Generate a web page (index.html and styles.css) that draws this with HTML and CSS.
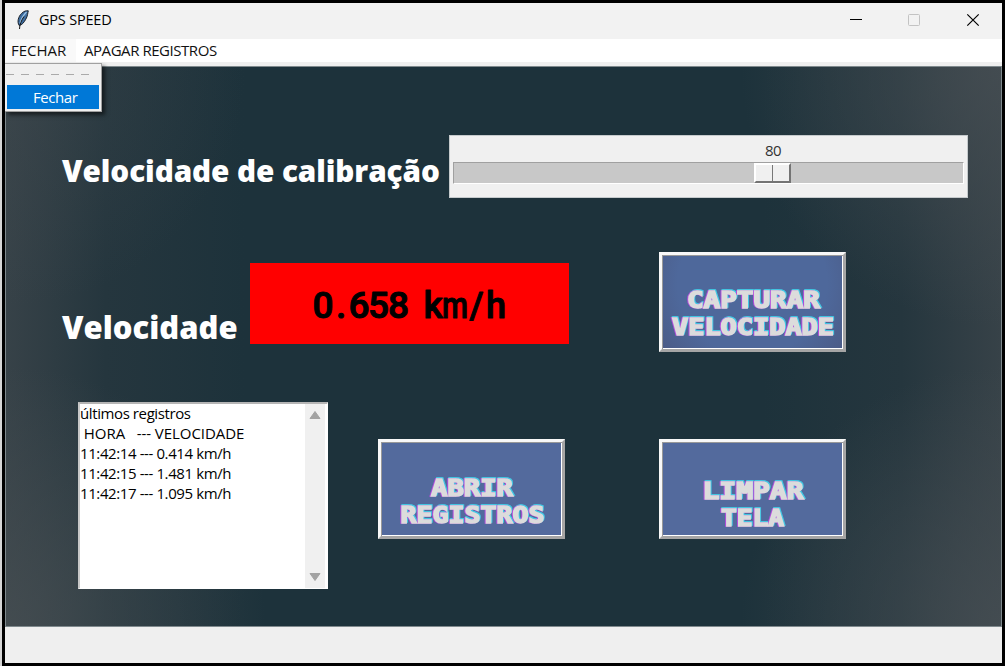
FILE: index.html
```html
<!DOCTYPE html>
<html lang="pt-BR">
<head>
<meta charset="utf-8">
<title>GPS SPEED</title>
<link rel="stylesheet" href="styles.css">
</head>
<body>
<div class="window">
  <header class="titlebar">
    <svg class="feather" width="14" height="20" viewBox="0 0 14 20">
      <path d="M3.2 15.5 C.8 12 2.4 6.5 5.5 3.5 C8 1 10 .6 12.3 .8 C11.6 3 11.8 6 9.8 9.2 C8 12.5 6 15 3.2 15.5Z" fill="#3d6c9f" stroke="#1b222b" stroke-width="1"/>
      <path d="M4 13.5 C5 9.5 7 5.5 10.5 2" fill="none" stroke="#9cc3e6" stroke-width="1.2"/>
      <path d="M3.5 19 C3.5 15 5.5 10 8 6.5" fill="none" stroke="#161616" stroke-width="1"/>
    </svg>
    <span class="title">GPS SPEED</span>
    <svg class="controls" width="130" height="14" viewBox="0 0 130 14" fill="none">
      <path d="M0 6.5H12" stroke="#000"/>
      <rect x="58.5" y="1.5" width="11" height="11" rx="1" stroke="#c3c3c3"/>
      <path d="M117.3 1.3L128.7 12.7M128.7 1.3L117.3 12.7" stroke="#000" stroke-width="1.2"/>
    </svg>
  </header>
  <nav class="menubar">
    <span class="menu menu-open">FECHAR</span>
    <span class="menu">APAGAR REGISTROS</span>
    <div class="dropdown">
      <div class="tearoff"></div>
      <div class="item">Fechar</div>
    </div>
  </nav>
  <main class="canvas">
    <section class="row calibration">
      <h2 class="label label-cal">Velocidade de calibração</h2>
      <div class="scale">
        <div class="scale-value">80</div>
        <div class="trough"><div class="thumb"><i></i><i></i></div></div>
      </div>
    </section>
    <section class="row speed">
      <h2 class="label label-speed">Velocidade</h2>
      <div class="readout">
        <svg width="320" height="81"><text class="hand" y="54.5"><tspan x="62.5 86 98.5 118 138 157">0.658 </tspan><tspan x="173.5">k</tspan><tspan x="192" textLength="26" lengthAdjust="spacingAndGlyphs">m</tspan><tspan x="219.5" textLength="14" lengthAdjust="spacingAndGlyphs">/</tspan><tspan x="236" textLength="20" lengthAdjust="spacingAndGlyphs">h</tspan></text></svg>
      </div>
      <button class="btn btn-vignette">
        <svg width="181" height="94">
          <g class="retro">
            <text x="25" y="53" textLength="133" lengthAdjust="spacingAndGlyphs">CAPTURAR</text>
            <text x="10" y="80" textLength="162" lengthAdjust="spacingAndGlyphs">VELOCIDADE</text>
          </g>
        </svg>
      </button>
    </section>
    <section class="row records">
      <div class="listbox">
        <ul class="list">
          <li>últimos registros</li>
          <li class="heads"> HORA   --- VELOCIDADE</li>
          <li>11:42:14 --- 0.414 km/h</li>
          <li>11:42:15 --- 1.481 km/h</li>
          <li>11:42:17 --- 1.095 km/h</li>
        </ul>
        <div class="scrollbar">
          <svg width="12" height="8"><path d="M6 0.5L11 7.5H1Z" fill="#a3a3a3" stroke="#a3a3a3" stroke-linejoin="round"/></svg>
          <svg width="12" height="8"><path d="M6 7.5L11 .5H1Z" fill="#a3a3a3" stroke="#a3a3a3" stroke-linejoin="round"/></svg>
        </div>
      </div>
      <button class="btn btn-open">
        <svg width="181" height="94">
          <g class="retro">
            <text x="50" y="54" textLength="82" lengthAdjust="spacingAndGlyphs">ABRIR</text>
            <text x="19.5" y="81" textLength="144" lengthAdjust="spacingAndGlyphs">REGISTROS</text>
          </g>
        </svg>
      </button>
      <button class="btn btn-clear">
        <svg width="181" height="94">
          <g class="retro">
            <text x="40.5" y="57" textLength="101" lengthAdjust="spacingAndGlyphs">LIMPAR</text>
            <text x="59" y="84" textLength="63" lengthAdjust="spacingAndGlyphs">TELA</text>
          </g>
        </svg>
      </button>
    </section>
  </main>
  <footer class="footer"></footer>
</div>
</body>
</html>
```
FILE: styles.css
```css
* { box-sizing: border-box; }
body {
  margin: 0;
  padding-left: 2px;
  background: #d6d6d6;
  font-family: "Open Sans", "Noto Sans", sans-serif;
}
.window {
  width: 1003px;
  height: 666px;
  border: 3px solid #000;
  background: #efefef;
  display: flex;
  flex-direction: column;
}
.titlebar {
  height: 36px;
  background: #f2f2f2;
  display: flex;
  align-items: center;
  padding: 0 22px 2px 11px;
}
.title {
  margin: -2px 0 0 9px;
  font-size: 14.5px;
  letter-spacing: -0.2px;
  color: #000;
}
.controls { margin-left: auto; }
.menubar {
  position: relative;
  height: 23px;
  background: #fff;
  display: flex;
  font-size: 15px;
  line-height: 22px;
  letter-spacing: -0.45px;
  color: #111;
}
.menu { padding: 0 9px 0 8px; }
.menu-open {
  width: 71px;
  padding: 0 0 0 6px;
  background: #f9f9f9;
  letter-spacing: 0;
}
.dropdown {
  position: absolute;
  z-index: 2;
  left: 0;
  top: 24px;
  width: 97px;
  height: 49px;
  padding: 1px 2px 2px 1px;
  background: #f0f0f0;
  border: 1px solid #a0a0a0;
  border-left: 0;
  box-shadow: 3px 3px 4px rgba(0, 0, 0, 0.55);
}
.tearoff {
  height: 20px;
  background: repeating-linear-gradient(90deg, #aaa 0 8px, transparent 8px 15px) 0 9px / 84px 1px no-repeat;
}
.item {
  width: 92px;
  height: 24px;
  margin-left: 1px;
  padding-left: 26px;
  background: #0078d7;
  color: #fff;
  line-height: 24px;
}
.canvas {
  height: 561px;
  margin-top: 4px;
  border: 1px solid #7f898d;
  background:
    radial-gradient(ellipse 240px 240px at 0 0, rgba(66, 75, 80, 0.4) 0%, rgba(60, 72, 78, 0) 100%),
    radial-gradient(ellipse 260px 260px at 100% 0, rgba(70, 78, 83, 0.8) 0%, rgba(60, 72, 78, 0) 100%),
    radial-gradient(ellipse 260px 260px at 0 100%, rgba(70, 78, 82, 0.8) 0%, rgba(60, 72, 78, 0) 100%),
    radial-gradient(ellipse 260px 260px at 100% 100%, rgba(70, 78, 83, 0.8) 0%, rgba(60, 72, 78, 0) 100%),
    linear-gradient(90deg, #374248 0, #25363e 10%, #1d323b 24%, #1d323b 76%, #25363e 90%, #374248 100%);
}
.row { display: flex; }
.label {
  margin: 0;
  color: #fff;
  font-size: 31px;
  font-weight: 800;
  line-height: 40px;
  white-space: nowrap;
}
.calibration { padding: 68px 0 0 56px; }
.label-cal {
  width: 387px;
  margin-top: 16px;
  font-size: 29.7px;
  letter-spacing: -0.08px;
}
.scale {
  width: 519px;
  height: 63px;
  padding: 5px 3px 0;
  background: #f0f0f0;
  border: 1px solid #c5cacc;
}
.scale-value {
  margin-left: 312px;
  height: 21px;
  font-size: 15px;
  line-height: 19px;
  letter-spacing: -0.6px;
  color: #333;
}
.trough {
  width: 511px;
  height: 22px;
  padding-left: 300px;
  background: #c8c8c8;
  border: 1px solid #fff;
  border-top-color: #a0a0a0;
  border-left-color: #a0a0a0;
}
.thumb {
  width: 37px;
  height: 20px;
  display: flex;
  background: #f0f0f0;
  border: 2px solid #fff;
  border-right-color: #747474;
  border-bottom-color: #747474;
}
.thumb i { flex: 1; }
.thumb i + i { border-left: 1px solid #777; }
.speed { padding: 53px 0 0 56px; }
.label-speed { width: 188px; margin-top: 56px; }
.readout {
  width: 319px;
  height: 81px;
  margin-top: 12px;
  background: #f00;
}
.readout svg, .btn svg { display: block; }
.hand {
  font: 500 37px Roboto, sans-serif;
  stroke: #000;
  stroke-width: 1px;
  stroke-linejoin: round;
}
.btn {
  width: 187px;
  height: 100px;
  margin: 1px 0 0 90px;
  padding: 0;
  border: 3px solid #f8f8f8;
  border-right-color: #a5a5a5;
  border-bottom-color: #a5a5a5;
  background: #536a9d;
  box-shadow: inset 1px 1px 0 #999, inset -1px -1px 0 #fff;
}
.btn-vignette { background: radial-gradient(ellipse 115px 110px at 50% 30%, #4e689b 65%, #4b5b86 100%); }
.retro {
  font: bold 23px "DejaVu Sans Mono", monospace;
  fill: #dcdcdc;
  stroke: #dcdcdc;
  stroke-width: 1.6px;
  filter: drop-shadow(-1px 0.8px 0 #b34bdc) drop-shadow(1px -0.8px 0 #42c8e4);
}
.records { padding: 50px 0 0 72px; }
.listbox {
  width: 250px;
  height: 187px;
  display: flex;
  background: #fff;
  border: 1px solid #fff;
  border-left: 2px solid #c8c8c8;
  border-top: 2px solid #b5b5b5;
}
.list {
  flex: 1;
  margin: -1px 0 0;
  padding: 0;
  list-style: none;
  font-size: 15px;
  line-height: 20px;
  letter-spacing: -0.4px;
  color: #000;
}
.list li { white-space: pre; }
.list .heads { letter-spacing: -0.05px; }
.scrollbar {
  width: 20px;
  margin-right: 2px;
  padding: 7px 0;
  background: #f0f0f0;
  display: flex;
  flex-direction: column;
  align-items: center;
  justify-content: space-between;
}
.btn-open { margin: 37px 0 0 50px; }
.btn-clear { margin: 37px 0 0 94px; }
.footer { flex: 1; background: #efefef; }
```
